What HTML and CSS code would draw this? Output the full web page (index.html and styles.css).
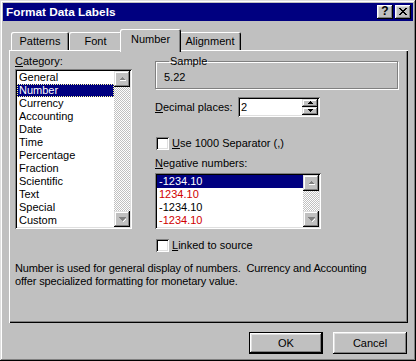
FILE: index.html
```html
<!DOCTYPE html>
<html>
<head>
    <title>Format Data Labels</title>
    <meta name="viewport" content="width=device-width, initial-scale=1.0">
    <link rel="stylesheet" href="styles.css">
</head>
<body>
    <div class="window">
        <div class="titlebar">
            <span class="title">Format Data Labels</span>
            <div class="title-buttons">
                <div class="title-btn help">?</div>
                <div class="title-btn close">
                    <svg width="8" height="7" viewBox="0 0 8 7">
                        <path d="M0 0h2v1h1v1h2v-1h1v-1h2v1h-1v1h-1v1h-1v1h1v1h1v1h1v1h-2v-1h-1v-1h-2v1h-1v1h-2v-1h1v-1h1v-1h1v-1h-1v-1h-1v-1h-1z" fill="#000"/>
                    </svg>
                </div>
            </div>
        </div>

        <div class="content">
            <!-- Tab strip -->
            <div class="tabs">
                <div class="tab tab-patterns">Patterns</div>
                <div class="tab tab-font">Font</div>
                <div class="tab tab-number selected">Number</div>
                <div class="tab tab-alignment">Alignment</div>
            </div>

            <div class="panel">
                <div class="panel-top">
                    <!-- Left column: category list -->
                    <div class="col-left">
                        <div class="label"><u>C</u>ategory:</div>
                        <div class="listbox category-list">
                            <ul class="items">
                                <li>General</li>
                                <li class="selected focused">Number</li>
                                <li>Currency</li>
                                <li>Accounting</li>
                                <li>Date</li>
                                <li>Time</li>
                                <li>Percentage</li>
                                <li>Fraction</li>
                                <li>Scientific</li>
                                <li>Text</li>
                                <li>Special</li>
                                <li>Custom</li>
                            </ul>
                            <div class="scrollbar">
                                <div class="scroll-btn">
                                    <svg width="9" height="6" viewBox="0 0 9 6"><path d="M4 1h1v1h1v1h1v1h-5v-1h1v-1h1z" fill="#808080"/><path d="M7 4h1v1h-6v-1z" fill="#fff"/></svg>
                                </div>
                                <div class="scroll-track"></div>
                                <div class="scroll-btn">
                                    <svg width="9" height="6" viewBox="0 0 9 6"><path d="M1 1h7v1h-1v1h-1v1h-1v1h-1v-1h-1v-1h-1v-1h-1z" fill="#808080"/><path d="M5 5h1v-1h1v-1h1v1h-1v1h-1v1h-1z" fill="#fff"/></svg>
                                </div>
                            </div>
                        </div>
                    </div>

                    <!-- Right column -->
                    <div class="col-right">
                        <fieldset class="sample">
                            <legend>Sample</legend>
                            <div class="sample-value">5.22</div>
                        </fieldset>

                        <div class="field-row">
                            <div class="field-label"><u>D</u>ecimal places:</div>
                            <div class="spin-box">
                                <span class="spin-value">2</span>
                                <div class="spin-buttons">
                                    <div class="spin-btn">
                                        <svg width="7" height="4" viewBox="0 0 7 4"><path d="M3 0h1v1h1v1h1v1h-5v-1h1v-1h1z" fill="#000"/></svg>
                                    </div>
                                    <div class="spin-btn">
                                        <svg width="7" height="4" viewBox="0 0 7 4"><path d="M1 0h5v1h-1v1h-1v1h-1v-1h-1v-1h-1z" fill="#000"/></svg>
                                    </div>
                                </div>
                            </div>
                        </div>

                        <div class="check-row separator-row">
                            <div class="checkbox"></div>
                            <span><u>U</u>se 1000 Separator (,)</span>
                        </div>

                        <div class="label negative-label"><u>N</u>egative numbers:</div>
                        <div class="listbox negative-list">
                            <ul class="items">
                                <li class="selected">-1234.10</li>
                                <li class="red">1234.10</li>
                                <li>-1234.10</li>
                                <li class="red">-1234.10</li>
                            </ul>
                            <div class="scrollbar">
                                <div class="scroll-btn">
                                    <svg width="9" height="6" viewBox="0 0 9 6"><path d="M4 1h1v1h1v1h1v1h-5v-1h1v-1h1z" fill="#808080"/><path d="M7 4h1v1h-6v-1z" fill="#fff"/></svg>
                                </div>
                                <div class="scroll-track"></div>
                                <div class="scroll-btn">
                                    <svg width="9" height="6" viewBox="0 0 9 6"><path d="M1 1h7v1h-1v1h-1v1h-1v1h-1v-1h-1v-1h-1v-1h-1z" fill="#808080"/><path d="M5 5h1v-1h1v-1h1v1h-1v1h-1v1h-1z" fill="#fff"/></svg>
                                </div>
                            </div>
                        </div>

                        <div class="check-row linked-row">
                            <div class="checkbox"></div>
                            <span><u>L</u>inked to source</span>
                        </div>
                    </div>
                </div>

                <p class="description">Number is used for general display of numbers.&nbsp; Currency and Accounting offer specialized formatting for monetary value.</p>
            </div>

            <div class="buttons">
                <div class="btn default">OK</div>
                <div class="btn">Cancel</div>
            </div>
        </div>
    </div>
</body>
</html>
```

FILE: styles.css
```css
* {
    box-sizing: border-box;
}

body {
    margin: 0;
    background-color: #c0c0c0;
    font-family: "Liberation Sans", Arial, sans-serif;
    font-size: 11px;
    line-height: 13px;
    color: #000;
}

u {
    text-decoration-thickness: 1px;
    text-underline-offset: 1px;
}

.window {
    width: 416px;
    height: 361px;
    padding: 3px;
    background-color: #c0c0c0;
    box-shadow: inset -1px -1px #000, inset 1px 1px #dfdfdf, inset -2px -2px #808080, inset 2px 2px #fff;
}

/* Title bar */
.titlebar {
    height: 18px;
    background-color: #000080;
    display: flex;
    align-items: center;
    justify-content: space-between;
    padding: 0 2px 0 3px;
}

.title {
    color: #fff;
    font-weight: bold;
    font-size: 11.8px;
}

.title-buttons {
    display: flex;
    gap: 2px;
}

.title-btn {
    width: 16px;
    height: 14px;
    background-color: #c0c0c0;
    box-shadow: inset -1px -1px #000, inset 1px 1px #fff, inset -2px -2px #808080, inset 2px 2px #dfdfdf;
    display: flex;
    align-items: center;
    justify-content: center;
}

.help {
    font-weight: bold;
    font-size: 12px;
    padding-bottom: 1px;
}

.close svg {
    display: block;
    margin-bottom: 1px;
}

/* Content */
.content {
    padding: 8px 5px 0 6px;
}

.tabs {
    display: flex;
    align-items: flex-end;
    height: 21px;
    padding-left: 2px;
}

.tab {
    height: 18px;
    background-color: #c0c0c0;
    text-align: center;
    padding-top: 3px;
    border-top-left-radius: 2px;
    border-top-right-radius: 2px;
    box-shadow: inset 1px 1px #fff, inset -1px 0 #000, inset -2px 0 #808080;
}

.tab-patterns {
    width: 58px;
}

.tab-font {
    width: 53px;
}

.tab-number {
    width: 57px;
}

.tab-alignment {
    width: 62px;
}

.tab.selected {
    position: relative;
    z-index: 1;
    height: 23px;
    width: 61px;
    margin: 0 -2px -2px;
    padding-top: 4px;
}

.panel {
    height: 273px;
    padding: 5px 6px 0 6px;
    box-shadow: inset 1px 1px #fff, inset -1px -1px #000, inset -2px -2px #808080;
}

.panel-top {
    display: flex;
    gap: 23px;
}

.col-left {
    width: 117px;
}

.col-right {
    width: 243px;
}

.label {
    height: 13px;
}

/* List boxes */
.listbox {
    display: flex;
    background-color: #fff;
    padding: 2px;
    box-shadow: inset 1px 1px #808080, inset -1px -1px #fff, inset 2px 2px #000, inset -2px -2px #dfdfdf;
}

.category-list {
    margin-top: 1px;
    height: 160px;
}

.items {
    list-style: none;
    margin: 0;
    padding: 0;
    flex: 1;
}

.items li {
    height: 13px;
    padding-left: 2px;
    white-space: nowrap;
}

.items li.selected {
    background-color: #000080;
    color: #fff;
}

.items li.focused {
    outline: 1px dotted #ffff9c;
    outline-offset: -1px;
}

.items li.red {
    color: #d00000;
}

.scrollbar {
    width: 16px;
    display: flex;
    flex-direction: column;
}

.scroll-track {
    flex: 1;
    background: repeating-conic-gradient(#c0c0c0 0 25%, #fff 0 50%) 0 0 / 2px 2px;
}

.scroll-btn {
    height: 16px;
    background-color: #c0c0c0;
    box-shadow: inset -1px -1px #000, inset 1px 1px #dfdfdf, inset -2px -2px #808080, inset 2px 2px #fff;
    display: flex;
    align-items: center;
    justify-content: center;
}

.scroll-btn svg {
    display: block;
}

/* Sample group */
.sample {
    margin: 0;
    min-width: 0;
    padding: 3px 8px 4px;
    border: 1px solid #808080;
    box-shadow: inset 1px 1px #fff, 1px 1px #fff;
}

.sample legend {
    margin-left: 5px;
    padding: 0 1px;
}

/* Decimal places */
.field-row {
    display: flex;
    align-items: center;
    margin-top: 8px;
}

.field-label {
    width: 83px;
}

.spin-box {
    width: 82px;
    height: 20px;
    background-color: #fff;
    display: flex;
    align-items: center;
    justify-content: space-between;
    padding: 2px;
    box-shadow: inset 1px 1px #808080, inset -1px -1px #fff, inset 2px 2px #000, inset -2px -2px #dfdfdf;
}

.spin-value {
    padding-left: 1px;
}

.spin-buttons {
    width: 16px;
    height: 16px;
    display: flex;
    flex-direction: column;
}

.spin-btn {
    flex: 1;
    background-color: #c0c0c0;
    box-shadow: inset -1px -1px #000, inset 1px 1px #dfdfdf, inset -2px -2px #808080, inset 2px 2px #fff;
    display: flex;
    align-items: center;
    justify-content: center;
}

.spin-btn svg {
    display: block;
}

/* Check boxes */
.check-row {
    display: flex;
    align-items: center;
    gap: 3px;
    height: 13px;
    padding-left: 1px;
}

.checkbox {
    width: 13px;
    height: 13px;
    background-color: #fff;
    box-shadow: inset 1px 1px #808080, inset -1px -1px #fff, inset 2px 2px #000, inset -2px -2px #dfdfdf;
}

.separator-row {
    margin-top: 20px;
}

.negative-label {
    margin-top: 7px;
}

.negative-list {
    margin-top: 3px;
    width: 166px;
    height: 56px;
}

.linked-row {
    margin-top: 10px;
}

.description {
    margin: 10px 0 0;
    width: 370px;
    letter-spacing: -0.12px;
}

/* Buttons */
.buttons {
    display: flex;
    justify-content: flex-end;
    gap: 10px;
    margin-top: 9px;
    padding-right: 1px;
}

.btn {
    width: 74px;
    height: 22px;
    background-color: #c0c0c0;
    display: flex;
    align-items: center;
    justify-content: center;
    box-shadow: inset -1px -1px #000, inset 1px 1px #fff, inset -2px -2px #808080, inset 2px 2px #dfdfdf;
}

.btn.default {
    box-shadow: inset 0 0 0 1px #000, inset -2px -2px #000, inset 2px 2px #fff, inset -3px -3px #808080, inset 3px 3px #dfdfdf;
}
```
